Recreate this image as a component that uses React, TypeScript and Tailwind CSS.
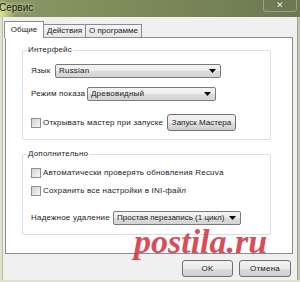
import React from "react";

function Combo({ text, w }: { text: string; w: string }) {
  return (
    <div
      className={`${w} h-[14px] flex items-center border border-[#7a7a7a] rounded-[2px] bg-[linear-gradient(#f4f4f4,#ececec_50%,#dcdcdc_51%,#d4d4d4)] pl-[3px] pr-[4px]`}
    >
      <span className="flex-1 whitespace-nowrap overflow-hidden">{text}</span>
      <svg width="7" height="4" viewBox="0 0 7 4" className="shrink-0">
        <path d="M0 0H7L3.5 4Z" fill="#000" />
      </svg>
    </div>
  );
}

function Check() {
  return (
    <div className="w-[10px] h-[10px] border border-[#8e8f8f] bg-[linear-gradient(135deg,#d2d2d2,#f7f7f7)] shrink-0" />
  );
}

function Btn({ text, w }: { text: string; w: string }) {
  return (
    <div
      className={`${w} h-[17px] flex items-center justify-center whitespace-nowrap border border-[#707070] rounded-[3px] bg-[linear-gradient(#f2f2f2,#ebebeb_50%,#dddddd_51%,#cfcfcf)]`}
    >
      {text}
    </div>
  );
}

export default function App() {
  return (
    <div className="w-[300px] h-[282px] relative overflow-hidden flex flex-col bg-[#c6cbb2] font-['Liberation_Sans',Arial,sans-serif] text-[8px] leading-[10px] tracking-[0.2px] text-[#1b1b1b]">
      {/* Title bar */}
      <div className="h-[17px] shrink-0 flex items-start bg-[radial-gradient(circle_at_0%_85%,#e2e88c_0,rgba(226,232,140,0)_16px),linear-gradient(to_right,#8a9766,#7d8a5a_45%,#6d7852)]">
        <span className="mt-[2px] -ml-[1px] text-[10px] leading-[11px] tracking-normal text-[#1a1a10] [text-shadow:0_0_4px_#f3f5c8]">
          Сервис
        </span>
        <div className="ml-auto mr-[3px] -mt-[1px] w-[34px] h-[13px] border border-[rgba(255,255,255,0.3)] rounded-b-[3px] flex items-center justify-center text-[9px] leading-[9px] text-white [text-shadow:0_0_2px_#333]">
          ✕
        </div>
      </div>

      <div className="flex flex-1 min-h-0">
        <div className="w-[3px] bg-[#dfe3cc] border-r border-[#b9bea6]" />
        {/* Body */}
        <div className="flex-1 bg-[#f0f0f0] flex flex-col pl-[2px] pr-[4px]">
          {/* Tabs */}
          <div className="mt-[4px] h-[16px] flex items-end relative z-10 -ml-[1px] whitespace-nowrap tracking-normal">
            <div className="w-[40px] h-[17px] -mb-[1px] bg-white border border-b-0 border-[#898c95] flex items-center justify-center pb-[1px]">
              Общие
            </div>
            <div className="px-[3px] h-[13px] bg-[linear-gradient(#f4f4f4,#e6e6e6)] border border-b-0 border-l-0 border-[#898c95] flex items-center justify-center">
              Действия
            </div>
            <div className="px-[3px] h-[13px] bg-[linear-gradient(#f4f4f4,#e6e6e6)] border border-b-0 border-l-0 border-[#898c95] flex items-center justify-center">
              О программе
            </div>
          </div>

          {/* Panel */}
          <div className="h-[217px] border border-[#898c95] bg-white flex flex-col whitespace-nowrap">
            <fieldset className="mt-[7px] ml-[16px] w-[249px] border border-[#d5dfe5] rounded-[2px] px-[8px] pt-[9px] pb-[8px] flex flex-col">
              <legend className="-ml-[4px] px-[1px] leading-[10px]">Интерфейс</legend>
              <div className="flex items-center h-[14px]">
                <span className="w-[24px]">Язык</span>
                <Combo text="Russian" w="w-[166px]" />
              </div>
              <div className="flex items-center h-[14px] mt-[9px]">
                <span className="w-[56px]">Режим показа</span>
                <Combo text="Древовидный" w="w-[129px]" />
              </div>
              <div className="flex items-center h-[17px] mt-[13px]">
                <Check />
                <span className="ml-[2px]">Открывать мастер при запуске</span>
                <div className="ml-auto mr-[26px] tracking-normal">
                  <Btn text="Запуск Мастера" w="w-[69px]" />
                </div>
              </div>
            </fieldset>

            <fieldset className="mt-[9px] ml-[16px] w-[249px] border border-[#d5dfe5] rounded-[2px] px-[8px] pt-[9px] pb-[9px] flex flex-col">
              <legend className="-ml-[4px] px-[1px] leading-[10px]">Дополнительно</legend>
              <div className="flex items-center h-[10px]">
                <Check />
                <span className="ml-[2px]">Автоматически проверять обновления Recuva</span>
              </div>
              <div className="flex items-center h-[10px] mt-[8px]">
                <Check />
                <span className="ml-[2px]">Сохранить все настройки в INI-файл</span>
              </div>
              <div className="flex items-center h-[14px] mt-[15px]">
                <span className="w-[82px]">Надежное удаление</span>
                <div className="tracking-normal">
                  <Combo text="Простая перезапись (1 цикл)" w="w-[128px]" />
                </div>
              </div>
            </fieldset>
          </div>

          {/* Buttons */}
          <div className="mt-[6px] flex justify-end gap-[6px] mr-[2px]">
            <Btn text="OK" w="w-[51px]" />
            <Btn text="Отмена" w="w-[52px]" />
          </div>
        </div>
        <div className="w-[3px] bg-[#c3c8ae] border-l border-[#9ea38d]" />
      </div>
      <div className="h-[2px] bg-[#dfe3cc]" />

      {/* Watermark */}
      <div className="absolute left-[134px] top-[225px] text-[34px] leading-[34px] tracking-normal font-bold italic font-['Liberation_Serif',serif] text-[#d12e3b] opacity-85 pointer-events-none whitespace-nowrap">
        postila.ru
      </div>
    </div>
  );
}
